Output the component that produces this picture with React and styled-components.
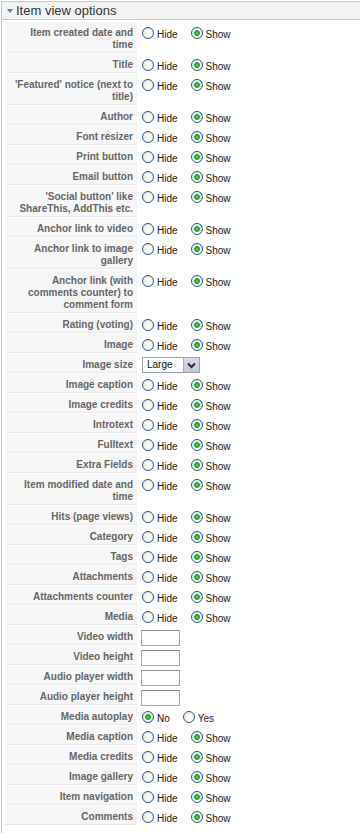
import React from 'react';
import styled, { createGlobalStyle } from 'styled-components';

const GlobalStyle = createGlobalStyle`
  html, body {
    margin: 0;
    padding: 0;
    height: 100%;
    overflow: hidden;
    background: #fff;
    font-family: "Liberation Sans", Arial, sans-serif;
  }
`;

const Page = styled.div`
  box-sizing: border-box;
  height: 100vh;
  padding: 1px 0 0 1px;
`;

const Panel = styled.div`
  box-sizing: border-box;
  height: 100%;
  border-left: 1px solid #c8c8c8;
  border-top: 1px solid #c8c8c8;
`;

const Header = styled.div`
  display: flex;
  align-items: center;
  height: 17px;
  padding-left: 5px;
  background: #f3f3f3;
  border-bottom: 1px solid #c8c8c8;
`;

const Arrow = styled.span`
  width: 0;
  height: 0;
  margin-top: 1px;
  border-left: 3px solid transparent;
  border-right: 3px solid transparent;
  border-top: 4px solid #3d86d9;
`;

const Title = styled.span`
  margin-left: 3px;
  font-size: 13px;
  line-height: 17px;
  color: #333;
`;

const Table = styled.div`
  display: flex;
  flex-direction: column;
  gap: 1px;
  padding: 2px 0 0 3px;
`;

const Row = styled.div`
  display: flex;
  gap: 1px;
`;

// labels keep the wrapping of the original table column
const Key = styled.div`
  box-sizing: border-box;
  width: 132px;
  flex-shrink: 0;
  padding: 5px 4px 1px 4px;
  background: #f6f6f6;
  border-bottom: 1px solid #e9e9e9;
  text-align: right;
  white-space: pre;
  font-size: 10px;
  font-weight: bold;
  line-height: 12px;
  color: #666;
`;

const Value = styled.div`
  display: flex;
  align-items: flex-start;
  padding: 5px 0 0 3px;
`;

const Option = styled.label`
  display: flex;
  align-items: flex-start;
  margin-left: ${(p) => (p.$first ? '1px' : '13px')};
`;

const Radio = styled.span`
  box-sizing: border-box;
  width: 12px;
  height: 12px;
  border-radius: 50%;
  border: 1px solid #2c5b88;
  background: ${(p) =>
    p.$checked
      ? 'radial-gradient(circle, #6fe06f 0, #21a121 2px, #2aa52a 2.6px, #f4f4ee 3.2px, #e4e4dc 100%)'
      : 'radial-gradient(circle at 60% 60%, #ffffff 0, #f2f2ec 50%, #dcdcd4 100%)'};
`;

const OptionText = styled.span`
  margin: 2px 0 0 3px;
  font-size: 10px;
  line-height: 12px;
  color: #1a1a1a;
`;

const Select = styled.div`
  display: flex;
  box-sizing: border-box;
  width: 58px;
  height: 16px;
  margin: -2px 0 0 1px;
  border: 1px solid #9aa0a8;
  background: #fff;
`;

const SelectText = styled.span`
  flex: 1;
  padding-left: 4px;
  font-size: 10px;
  line-height: 14px;
  color: #111;
`;

const SelectButton = styled.span`
  display: flex;
  align-items: center;
  justify-content: center;
  width: 15px;
  background: linear-gradient(#d8dbe6, #c4c8d6);
  border-left: 1px solid #a9aebd;
`;

const TextInput = styled.div`
  box-sizing: border-box;
  width: 39px;
  height: 16px;
  margin: -1px 0 -2px 0;
  border: 1px solid #a8a8a8;
  border-top-color: #8c8c8c;
  background: #fff;
`;

const rows = [
  { label: 'Item created date and\ntime' },
  { label: 'Title' },
  { label: "'Featured' notice (next to\ntitle)" },
  { label: 'Author' },
  { label: 'Font resizer' },
  { label: 'Print button' },
  { label: 'Email button' },
  { label: "'Social button' like\nShareThis, AddThis etc." },
  { label: 'Anchor link to video' },
  { label: 'Anchor link to image\ngallery' },
  { label: 'Anchor link (with\ncomments counter) to\ncomment form' },
  { label: 'Rating (voting)' },
  { label: 'Image' },
  { label: 'Image size', type: 'select' },
  { label: 'Image caption' },
  { label: 'Image credits' },
  { label: 'Introtext' },
  { label: 'Fulltext' },
  { label: 'Extra Fields' },
  { label: 'Item modified date and\ntime' },
  { label: 'Hits (page views)' },
  { label: 'Category' },
  { label: 'Tags' },
  { label: 'Attachments' },
  { label: 'Attachments counter' },
  { label: 'Media' },
  { label: 'Video width', type: 'input' },
  { label: 'Video height', type: 'input' },
  { label: 'Audio player width', type: 'input' },
  { label: 'Audio player height', type: 'input' },
  { label: 'Media autoplay', options: ['No', 'Yes'], checked: 0 },
  { label: 'Media caption' },
  { label: 'Media credits' },
  { label: 'Image gallery' },
  { label: 'Item navigation' },
  { label: 'Comments' },
];

const Chevron = () => (
  <svg width="9" height="7" viewBox="0 0 9 7">
    <path d="M1 1.5 L4.5 5 L8 1.5" fill="none" stroke="#2a2a3a" strokeWidth="2" />
  </svg>
);

const Field = ({ row }) => {
  if (row.type === 'select') {
    return (
      <Select>
        <SelectText>Large</SelectText>
        <SelectButton>
          <Chevron />
        </SelectButton>
      </Select>
    );
  }
  if (row.type === 'input') {
    return <TextInput />;
  }
  const options = row.options || ['Hide', 'Show'];
  const checked = row.checked ?? 1;
  return options.map((opt, i) => (
    <Option key={opt} $first={i === 0}>
      <Radio $checked={i === checked} />
      <OptionText>{opt}</OptionText>
    </Option>
  ));
};

const App = () => (
  <>
    <GlobalStyle />
    <Page>
      <Panel>
        <Header>
          <Arrow />
          <Title>Item view options</Title>
        </Header>
        <Table>
          {rows.map((row) => (
            <Row key={row.label}>
              <Key>{row.label}</Key>
              <Value>
                <Field row={row} />
              </Value>
            </Row>
          ))}
        </Table>
      </Panel>
    </Page>
  </>
);

export default App;
